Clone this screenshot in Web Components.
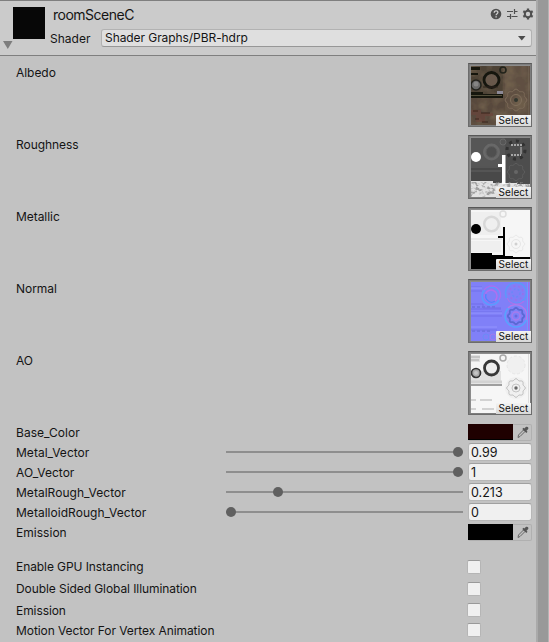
<!DOCTYPE html>
<html lang="en">
<head>
<meta charset="utf-8">
<title>roomSceneC</title>
<style>
html,body{margin:0;height:100%;overflow:hidden;background:#c2c2c2}
body{font:12px/16px Inter,"Liberation Sans",sans-serif;color:#141414}
</style>
</head>
<body>
<material-inspector></material-inspector>
<script>
const define = (name, css, html) => customElements.define(name, class extends HTMLElement {
  constructor() {
    super();
    this.attachShadow({mode: 'open'});
  }
  connectedCallback() {
    this.shadowRoot.innerHTML = `<style>*{box-sizing:border-box}${css}</style>` + (typeof html === 'function' ? html(this) : html);
  }
});

const gear = (cx, cy, r, stroke, w = 1) => {
  let d = '';
  for (let i = 0; i <= 64; i++) {
    const a = i / 64 * Math.PI * 2, k = r * (1 + .09 * Math.cos(a * 8));
    d += (i ? 'L' : 'M') + (cx + k * Math.cos(a)).toFixed(1) + ' ' + (cy + k * Math.sin(a)).toFixed(1);
  }
  return `<path d="${d}Z" fill="none" stroke="${stroke}" stroke-width="${w}"/>`;
};
const noise = (id, fx, fy, matrix, rect) => `<filter id="${id}" x="0" y="0" width="1" height="1"><feTurbulence type="fractalNoise" baseFrequency="${fx} ${fy}" numOctaves="3" seed="4"/><feColorMatrix values="${matrix}"/></filter><rect ${rect} filter="url(#${id})"/>`;

const maps = {
  albedo: `<rect width="59" height="59" fill="#594a3d"/>
    <path d="M0 0H32V28H0z" fill="#4e4336"/><path d="M34 0H59V59H34z" fill="#605042"/>
    ${noise('a', .09, .09, '0 0 0 0 .18 0 0 0 0 .13 0 0 0 0 .08 1.6 0 0 0 -.6', 'width="59" height="59"')}
    <path d="M0 1h9v3H0zM0 7h7v2H0zM0 26h12v2h18v-2h2v6H0z" fill="#171911"/><path d="M0 29.5h31" stroke="#52503b"/>
    <circle cx="20.500" cy="14" r="7.500" fill="#67594b" stroke="#131510" stroke-width="2.800"/>
    <circle cx="5" cy="19" r="5" fill="#686766" stroke="#22231e" stroke-width="1.500"/><circle cx="5" cy="18" r="2.500" fill="#858584"/>
    <circle cx="32" cy="4" r="3" fill="none" stroke="#22241b" stroke-width="1.600"/>
    <path d="M26 25h6v3h-6z" fill="#8c8996"/><path d="M12 21h15" stroke="#31291f"/>
    ${gear(45, 34, 10, '#7d6c59')}<circle cx="45" cy="34" r="5.500" fill="none" stroke="#806f5c"/><circle cx="45" cy="34" r="2" fill="#30362d"/>
    <path d="M0 44h10v3h12v3H14v6H5v-7H0z" fill="#713e37" opacity=".45"/>
    <path d="M2 45h5m3 2h9M4 53h4m3 3h6" stroke="#3b251f"/><path d="M57.500 0v59" stroke="#776858" opacity=".5"/>`,
  rough: `<rect width="59" height="59" fill="#565656"/><path d="M0 28h31v17H0z" fill="#484848"/><path d="M34 0h25v46H34z" fill="#4d4d4d"/>
    <path d="M0 29h30M0 33h30" stroke="#606060"/>
    <circle cx="20.500" cy="14" r="8.500" fill="#686868"/><circle cx="20.500" cy="14" r="5.500" fill="#505050" stroke="#5d5d5d"/>
    <circle cx="32" cy="4" r="3" fill="none" stroke="#696969"/>
    <circle cx="45" cy="12" r="9" fill="none" stroke="#303030" stroke-width="3" stroke-dasharray="3 4"/>
    <path d="M40 7h11M40 17h10" stroke="#c4c4c4" stroke-width="1.500" stroke-dasharray="2 1"/><path d="M50 9v7" stroke="#bbb"/>
    ${gear(45, 34, 8, '#606060')}<circle cx="45" cy="34" r="2" fill="#666"/>
    <path d="M0 43h22v2h24v1h13v13H0z" fill="#e2e2e2"/>
    ${noise('n', .25, .3, '0 0 0 0 .35 0 0 0 0 .35 0 0 0 0 .35 5 0 0 0 -2.4', 'y="44" width="59" height="15"')}
    <circle cx="5" cy="19" r="5" fill="#fff"/><path d="M31 17h3.500v29H31v-17h-4v-3h4z" fill="#fff"/>`,
  metal: `<rect width="59" height="59" fill="#f6f6f6"/><path d="M0 2h30v23H0zM0 31h30v11H0z" fill="#efefef"/>
    <path d="M0 29h31" stroke="#d8d8d8"/>
    <circle cx="20.500" cy="14" r="7.300" fill="#efefef" stroke="#d8d8d8" stroke-width="2.500"/><circle cx="32" cy="4" r="3" fill="none" stroke="#ddd" stroke-width="1.500"/>
    ${gear(45, 34, 8, '#e8e8e8')}<circle cx="45" cy="34" r="4.500" fill="none" stroke="#e6e6e6"/><circle cx="45" cy="34" r="1.500" fill="#d0d0d0"/>
    <circle cx="5" cy="19" r="5" fill="#000"/><path d="M32 17h2v29h8v1h17v12H0V43h21v2h11V28h-5v-2h5z" fill="#000"/>`,
  normal: `<rect width="59" height="59" fill="#8080f8"/>
    <path d="M0 5h11M0 9h11M0 30h31M0 48h26" stroke="#7170ea"/><path d="M0 6h11M0 31h31M0 45h26" stroke="#9394ff"/>
    <path d="M0 22h12v4h18M0 27h30M0 34h31" fill="none" stroke="#706de9"/>
    <path d="M1 25h25M1 49h20" stroke="#6f73e4" stroke-width="2" stroke-dasharray="3 2"/>
    <g fill="none" stroke-width="1.500"><circle cx="20" cy="14" r="9" stroke="#5a9cff"/><path d="M13 8a9 9 0 0 1 15 10" stroke="#a76ff1"/>
    <circle cx="20" cy="14" r="6" stroke="#b070ef"/><path d="M15 12a6 6 0 0 0 9 7" stroke="#5084ff"/>
    <circle cx="45" cy="11" r="10.500" stroke="#5c98fa"/><path d="M36 16a10.500 10.500 0 0 0 17 3" stroke="#a771ed"/>
    <circle cx="45" cy="11" r="7" stroke="#9870ea" stroke-dasharray="2 3"/><circle cx="45" cy="11" r="4" stroke="#6a88f8" stroke-dasharray="2 2"/>
    <circle cx="45" cy="34" r="11" stroke="#57a3ff"/><path d="M37 26a11 11 0 0 1 18 12" stroke="#b474eb"/></g>
    ${gear(45, 34, 7.5, '#5a69d5', 1.8)}<circle cx="45" cy="34" r="4" fill="none" stroke="#a77aec" stroke-width="1.500"/><circle cx="45" cy="34" r="1.500" fill="#696ae0"/>
    <path d="M57.500 0v49" stroke="#a06cea"/><path d="M56.500 0v49" stroke="#6d9aff"/>
    <circle cx="15" cy="55" r="3" fill="none" stroke="#6a8cf6"/><circle cx="22" cy="55" r="3" fill="none" stroke="#a279ec"/>`,
  ao: `<rect width="59" height="59" fill="#f6f6f6"/><path d="M0 1h9v7H0zM0 23h14v5H0zM10 17h20v10H10z" fill="#e0e0e0"/>
    <path d="M0 3h9M0 6h8" stroke="#aaa"/><path d="M0 31h31" stroke="#808080" stroke-width="1.500"/><path d="M0 28h31" stroke="#d2d2d2" stroke-width="3"/>
    <circle cx="20.500" cy="14" r="7" fill="#eee" stroke="#373737" stroke-width="2.800"/>
    <circle cx="5" cy="19" r="4.500" fill="#aaa" stroke="#333" stroke-width="1.700"/><circle cx="5" cy="19" r="2" fill="#c5c5c5"/>
    <circle cx="32" cy="4" r="3" fill="none" stroke="#aaa" stroke-width="1.500"/>
    <circle cx="45" cy="11" r="9" fill="#f0f0f0" stroke="#e6e6e6" stroke-dasharray="3 2"/>
    <circle cx="45" cy="34" r="11" fill="#f0f0f0"/>${gear(45, 34, 8.5, '#bdbdbd')}<circle cx="45" cy="34" r="4" fill="none" stroke="#c4c4c4"/><circle cx="45" cy="34" r="1.700" fill="#686868"/>
    <path d="M0 46h5m4 0h12M0 55h5m6 0h12" stroke="#d2d2d2" stroke-width="2"/><path d="M57.500 0v59" stroke="#ddd"/>`
};

define('texture-slot', `:host{display:flex;justify-content:space-between;height:72px;padding:0 4px 0 16px}
  span{padding-top:2px}
  div{position:relative;width:64px;height:64px;background:#8c8c8c;border:1px solid #6c6c6c;border-top-color:#585858;padding:2px;box-shadow:inset 0 0 0 1px #7d7d7d}
  svg{display:block;width:59px;height:59px;overflow:hidden}
  b{position:absolute;right:0;bottom:0;width:35px;height:11px;font-weight:400;font-size:10px;line-height:11px;text-align:center;background:linear-gradient(#f3f3f3,#d8d8d8);letter-spacing:.05px;color:#111;border-radius:1px 0 0 0}`,
  el => `<span><slot></slot></span><div><svg viewBox="0 0 59 59"><defs><filter id="soft"><feGaussianBlur stdDeviation=".5"/></filter></defs><g filter="url(#soft)">${maps[el.getAttribute('map')]}</g></svg><b>Select</b></div>`);

define('color-row', `:host{display:flex;height:20px;padding:1px 4px 0 16px;justify-content:space-between}
  span{padding-top:1px}
  div{display:flex;width:64px;height:17px;border:1px solid #b0b0b0;border-left:0;border-radius:2px}
  i{width:45px;height:16px;margin-top:-1px;background:var(--c);border-bottom:1px solid #000}
  svg{width:14px;height:14px;margin:0 0 0 3px}`,
  `<span><slot></slot></span><div><i></i><svg viewBox="0 0 14 14"><path d="M2 12.500l.5-2.500 5-5 1.500 1.500-5 5z" fill="none" stroke="#666"/><path d="M6.300 4l4 4 1.200-1.200-1-1 1.500-1.500c1.300-1.500-.7-3.500-2.200-2.200L8.300 3.600l-.8-.8z" fill="#555"/></svg></div>`);

define('slider-row', `:host{display:grid;grid-template-columns:210px 237px 69px;height:20px;padding-left:16px}
  span{padding-top:2px}
  .t{height:2px;margin-top:8px;background:#8e8e8e;display:flex;align-items:center}
  .t i{width:10px;height:10px;border-radius:50%;background:#606060;flex:none;margin-left:var(--x)}
  .v{margin-left:5px;width:64px;height:18px;background:#f0f0f0;border:1px solid #b7b7b7;border-top-color:#a0a0a0;border-radius:3px;padding:1px 0 0 2px;letter-spacing:0;font-size:12.500px}`,
  el => `<span><slot></slot></span><div class="t"><i></i></div><div class="v">${el.getAttribute('value')}</div>`);

define('toggle-row', `:host{display:flex;justify-content:space-between;align-items:flex-start;padding:0 55px 0 16px;letter-spacing:-.08px}
  i{width:14px;height:14px;margin-top:1px;background:#f0f0f0;border:1px solid #b5b5b5;border-top-color:#999;border-radius:2px}
  span{white-space:nowrap;padding-top:var(--t,0px)}`,
  `<span><slot></slot></span><i></i>`);

define('material-header', `:host{display:flex;height:56px;background:#cbcbcb;border-top:1px solid #7f7f7f;border-bottom:1px solid #7f7f7f;padding:0 4px 0 3px}
  .fold{width:10px;padding-top:40px}.fold svg{display:block}
  .pre{width:32px;height:32px;margin-top:6px;background:#070707}
  .main{flex:1;display:flex;flex-direction:column}
  .top{display:flex;justify-content:space-between;height:28px;padding:5px 0 0 8px;font-size:14px;line-height:18px;letter-spacing:-.5px}
  .icons{display:flex;gap:4px;padding:2px 0 0;margin-right:-2px}
  .icons svg{width:12px;height:12px}
  .row{display:flex;height:18px}
  .row span{flex:none;width:56px;padding:2px 0 0 5px;letter-spacing:0}
  .drop{flex:1;height:18px;background:#dfdfdf;border:1px solid #b2b2b2;border-bottom-color:#979797;border-radius:3px;display:flex;justify-content:space-between;padding:0 5px 0 3px;letter-spacing:-.07px}
  .drop svg{margin-top:6px}`,
  `<div class="fold"><svg width="10" height="8"><path d="M0 0h9.500L4.800 8z" fill="#7d7d7d"/></svg></div><div class="pre"></div>
  <div class="main"><div class="top"><slot></slot><div class="icons">
  <svg viewBox="0 0 12 12"><circle cx="6" cy="6" r="5.300" fill="#4f4f4f"/><path d="M4.200 4.700C4.200 2.200 8 2.300 7.900 4.500 7.800 5.700 6.100 5.700 6.100 7.300" fill="none" stroke="#d0d0d0" stroke-width="1.300"/><path d="M5.400 8.200h1.400v1.400H5.400z" fill="#d0d0d0"/></svg>
  <svg viewBox="0 0 12 12"><path d="M1 3.500h6M8.500 3.500h3M8.500 1v5M1 8.500h3M5.500 8.500h6M4.500 6v5" fill="none" stroke="#4f4f4f" stroke-width="1.200"/></svg>
  <svg viewBox="0 0 12 12"><circle cx="6" cy="6" r="3.200" fill="none" stroke="#4f4f4f" stroke-width="2"/><path d="M6 .6v2M6 9.400v2M1.300 3.300l1.800 1M8.900 7.700l1.800 1M1.300 8.700l1.800-1M8.900 4.300l1.800-1" stroke="#4f4f4f" stroke-width="2.300"/></svg>
  </div></div><div class="row"><span>Shader</span><div class="drop"><slot name="shader"></slot><svg width="8" height="5"><path d="M0 0h7.500L3.800 4.500z" fill="#4c4c4c"/></svg></div></div></div>`);

define('material-inspector', `:host{display:grid;grid-template-columns:536px 2px 10px 1px;height:642px;letter-spacing:.03px}
  .edge{background:#aaa}.bar{background:#999}.end{background:#b4b4b4}
  main{min-width:0;overflow:hidden}
  .maps{padding-top:7px;letter-spacing:-.05px}
  header-title{letter-spacing:0}
  [slot]{letter-spacing:-.07px}
  material-header{letter-spacing:-.45px}
  toggle-row{height:var(--h)}
  .toggles{padding-top:16px}`,
  `<main><material-header>roomSceneC<span slot="shader">Shader Graphs/PBR-hdrp</span></material-header>
  <div class="maps"><texture-slot map="albedo">Albedo</texture-slot><texture-slot map="rough">Roughness</texture-slot><texture-slot map="metal">Metallic</texture-slot><texture-slot map="normal">Normal</texture-slot><texture-slot map="ao">AO</texture-slot></div>
  <color-row style="--c:#1f0000">Base_Color</color-row>
  <slider-row value="0.99" style="--x:227px">Metal_Vector</slider-row>
  <slider-row value="1" style="--x:227px">AO_Vector</slider-row>
  <slider-row value="0.213" style="--x:47px">MetalRough_Vector</slider-row>
  <slider-row value="0" style="--x:0px">MetalloidRough_Vector</slider-row>
  <color-row style="--c:#000">Emission</color-row>
  <div class="toggles"><toggle-row style="--h:22px">Enable GPU Instancing</toggle-row><toggle-row style="--h:21px">Double Sided Global Illumination</toggle-row><toggle-row style="--h:20px;--t:1px">Emission</toggle-row><toggle-row style="--h:20px;--t:1px">Motion Vector For Vertex Animation</toggle-row></div></main>
  <div class="edge"></div><div class="bar"></div><div class="end"></div>`);
</script>
</body>
</html>
